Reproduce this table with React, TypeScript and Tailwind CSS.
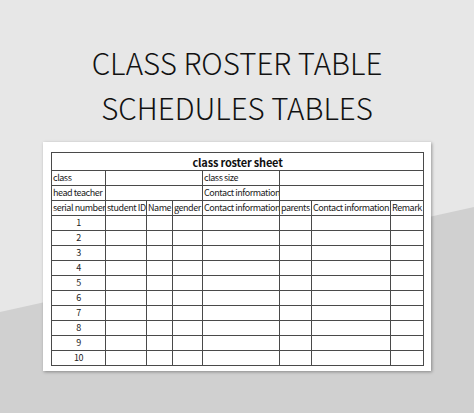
import React from "react";

const font = { fontFamily: '"Noto Sans CJK SC", "Noto Sans", sans-serif' };

const colWidths = [54, 41, 26, 30, 77, 32, 79, 33];
const headers = [
  "serial number",
  "student ID",
  "Name",
  "gender",
  "Contact information",
  "parents",
  "Contact information",
  "Remark",
];

const base = "border border-[#4a4a4a] h-[15px] p-0 align-middle whitespace-nowrap overflow-hidden leading-[14px]";
const cell = base + " pl-[1px] text-left";

const App: React.FC = () => {
  return (
    <div
      className="relative w-[474px] h-[413px] overflow-hidden bg-[#e7e7e7]"
      style={font}
    >
      {/* darker diagonal band in the backdrop */}
      <div className="absolute inset-0 bg-[#d0d0d0] [clip-path:polygon(0_312px,100%_207px,100%_100%,0_100%)]" />

      <div className="relative flex flex-col items-center">
        <h1 className="mt-[40px] text-center text-[29.5px] leading-[45px] font-light text-[#111]">
          CLASS ROSTER TABLE
          <br />
          SCHEDULES TABLES
        </h1>

        <div className="mt-[12px] w-[388px] h-[229px] bg-white shadow-[1px_1px_3px_rgba(0,0,0,0.35)] pt-[10px] pl-[8px]">
          <table className="border-collapse table-fixed w-[372px] text-[9px] tracking-[-0.45px] text-[#222]">
            <colgroup>
              {colWidths.map((w, i) => (
                <col key={i} style={{ width: w }} />
              ))}
            </colgroup>
            <tbody>
              <tr>
                <td
                  colSpan={8}
                  className="border border-[#4a4a4a] h-[18px] p-0 text-center font-bold text-[11px] tracking-[-0.2px] text-[#111] leading-[16px]"
                >
                  class roster sheet
                </td>
              </tr>
              <tr>
                <td className={cell}>class</td>
                <td className={cell} colSpan={3}></td>
                <td className={cell}>class size</td>
                <td className={cell} colSpan={3}></td>
              </tr>
              <tr>
                <td className={cell}>head teacher</td>
                <td className={cell} colSpan={3}></td>
                <td className={cell}>Contact information</td>
                <td className={cell} colSpan={3}></td>
              </tr>
              <tr>
                {headers.map((h, i) => (
                  <td key={i} className={cell}>
                    {h}
                  </td>
                ))}
              </tr>
              {Array.from({ length: 10 }, (_, r) => (
                <tr key={r}>
                  <td className={base + " text-center"}>{r + 1}</td>
                  {colWidths.slice(1).map((_, c) => (
                    <td key={c} className={cell}></td>
                  ))}
                </tr>
              ))}
            </tbody>
          </table>
        </div>
      </div>
    </div>
  );
};

export default App;
